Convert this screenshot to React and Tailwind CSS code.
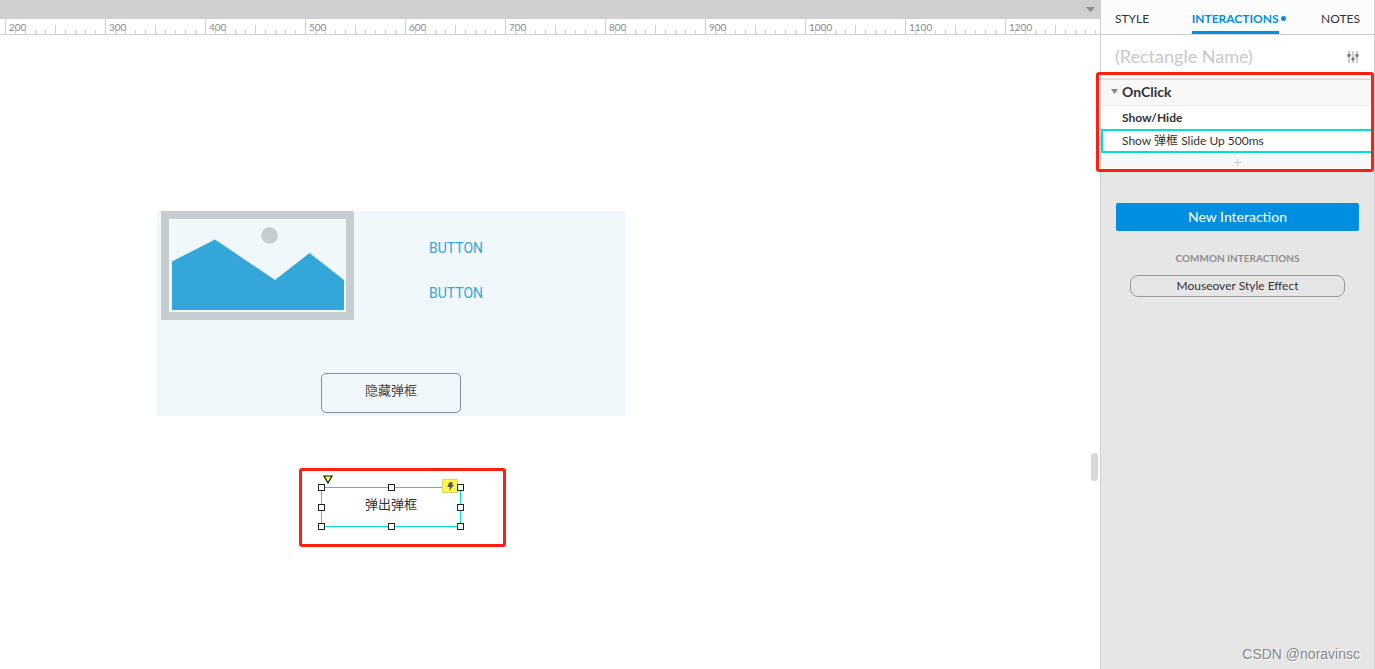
import React from "react";
import clsx from "clsx";

const rulerMarks = [200, 300, 400, 500, 600, 700, 800, 900, 1000, 1100, 1200];

const tabs = [
  { id: "style", label: "STYLE" },
  { id: "interactions", label: "INTERACTIONS", hasContent: true },
  { id: "notes", label: "NOTES" },
];

const handles = [
  "left-[-3px] top-[-3px]",
  "left-[67px] top-[-3px]",
  "left-[136px] top-[-3px]",
  "left-[-3px] top-[17px]",
  "left-[136px] top-[17px]",
  "left-[-3px] top-[36px]",
  "left-[67px] top-[36px]",
  "left-[136px] top-[36px]",
];

const RulerSegment = ({ value }) => (
  <div className="relative flex h-full w-[100px] shrink-0 items-end gap-[9px]">
    {Array.from({ length: 10 }, (_, i) => (
      <span
        key={i}
        className={clsx(
          "w-px bg-[#cfcfcf]",
          i === 0 ? "h-full" : i === 5 ? "h-[9px]" : "h-1"
        )}
      />
    ))}
    <span className="absolute left-1 top-0 text-[10px] leading-4 text-[#888]">
      {value}
    </span>
  </div>
);

const Ruler = () => (
  <div className="flex h-4 overflow-hidden border-b border-[#cfcfcf] bg-white pl-[5px]">
    {rulerMarks.map((mark) => (
      <RulerSegment key={mark} value={mark} />
    ))}
  </div>
);

const ImagePlaceholder = () => (
  <svg
    viewBox="0 0 193 109"
    className="h-[109px] w-[193px] shrink-0"
    role="img"
    aria-label="Image placeholder"
  >
    <path d="M0 0h193v109H0z" fill="#c6cdd0" />
    <path d="M8 8h177v93H8z" fill="#f0f8fb" />
    <circle cx="108.5" cy="24.5" r="8.3" fill="#c6cdd0" />
    <path d="M11 50.5 54 28.5l60 40.5 34.500-27L183 69v30H11z" fill="#34a6da" />
  </svg>
);

const Popup = () => (
  <div className="absolute left-[157px] top-[176px] flex h-[205px] w-[468px] flex-col items-center justify-between bg-[#f0f8fb] pb-[3px]">
    <div className="flex w-full pl-1">
      <ImagePlaceholder />
      <div className="ml-[60px] flex w-[84px] flex-col gap-[17px] pt-[23px] font-['Roboto',sans-serif] text-sm text-[#34a6da]">
        <button type="button" className="h-7">
          BUTTON
        </button>
        <button type="button" className="h-7">
          BUTTON
        </button>
      </div>
    </div>
    <button
      type="button"
      className="h-10 w-[140px] rounded-[5px] border border-[#868f93] pb-1 text-[13px] text-[#444]"
    >
      隐藏弹框
    </button>
  </div>
);

const SelectedButton = () => (
  <div className="absolute left-[321px] top-[452px] h-10 w-[140px]">
    <button
      type="button"
      className="h-full w-full border border-[#00dfd8] pb-1 text-[13px] text-[#333]"
    >
      弹出弹框
    </button>
    <span className="absolute -top-2 left-[121px] flex h-[14px] w-4 items-center justify-center border border-[#d6d27c] bg-[#fff945]">
      <svg viewBox="0 0 8 10" className="h-[9px] w-[7px]" fill="#555">
        <path d="M2.500 0h4.500L5.500 3H8L2.500 10l1-4.500H.5z" />
      </svg>
    </span>
    <svg viewBox="0 0 10 9" className="absolute -top-3 left-[2px] h-[9px] w-[10px]">
      <path
        d="M1 1h8L5 8z"
        fill="#fff945"
        stroke="#111"
        strokeWidth="1.2"
      />
    </svg>
    {handles.map((place) => (
      <span
        key={place}
        className={clsx("absolute h-[7px] w-[7px] border border-[#222] bg-white", place)}
      />
    ))}
  </div>
);

const Canvas = () => (
  <main className="relative flex-1 overflow-hidden bg-white">
    <Popup />
    <SelectedButton />
    <div className="pointer-events-none absolute left-[299px] top-[433px] h-[79px] w-[207px] rounded-[3px] border-3 border-[#ff1f12]" />
    <div className="absolute right-[2px] top-[418px] h-7 w-[7px] rounded-[3px] bg-[#d8d8d8]" />
  </main>
);

const Tabs = () => (
  <nav className="flex h-[35px] items-start justify-between border-b border-[#cfcfcf] bg-[#fcfcfc] px-[14px] text-[12px]">
    {tabs.map(({ id, label, hasContent }) => (
      <button
        key={id}
        type="button"
        className={clsx(
          "relative h-[34px] pt-[6px]",
          hasContent
            ? "border-b-3 border-[#008fe0] font-bold text-[#008fe0]"
            : "pb-[3px] text-[#333]"
        )}
      >
        {label}
        {hasContent && (
          <span className="absolute -right-[7px] top-4 h-[5px] w-[5px] rounded-full bg-[#008fe0]" />
        )}
      </button>
    ))}
  </nav>
);

const SlidersIcon = () => (
  <svg viewBox="0 0 12 12" className="h-3 w-3" fill="#777">
    <path d="M1.500 0h1v12h-1zM5.500 0h1v12h-1zM9.500 0h1v12h-1z" fill="#999" />
    <circle cx="2" cy="4.500" r="1.700" />
    <circle cx="6" cy="8" r="1.700" />
    <circle cx="10" cy="4.500" r="1.700" />
  </svg>
);

const EventCase = () => (
  <section className="bg-white text-[#333]">
    <h2 className="flex h-[27px] items-center gap-1 border-y border-[#ececec] border-t-[#dcdcdc] bg-[#f8f8f8] pl-[10px] pb-[2px] text-sm font-bold">
      <svg viewBox="0 0 7 5" className="h-[5px] w-[7px]" fill="#888">
        <path d="M0 0h7L3.500 5z" />
      </svg>
      OnClick
    </h2>
    <h3 className="flex h-[23px] items-center pl-[21px] text-[12px] font-bold">
      Show/Hide
    </h3>
    <button
      type="button"
      className="flex h-6 w-full items-center border-2 border-[#00dfd8] pb-px pl-[19px] text-[12px]"
    >
      Show 弹框 Slide Up 500ms
    </button>
    <button
      type="button"
      aria-label="Add target"
      className="flex h-[18px] w-full items-center justify-center bg-[#f8f8f8]"
    >
      <svg viewBox="0 0 7 7" className="h-[7px] w-[7px]" fill="#ccc">
        <path d="M3 0h1v3h3v1H4v3H3V4H0V3h3z" />
      </svg>
    </button>
  </section>
);

const InteractionsPanel = () => (
  <aside className="relative flex w-[275px] shrink-0 flex-col border-x border-[#cfcfcf] bg-[#e6e6e6]">
    <Tabs />
    <div className="flex h-11 items-center justify-between border-b border-[#e6e6e6] bg-white pl-[14px] pr-[15px]">
      <input
        type="text"
        aria-label="Shape name"
        placeholder="(Rectangle Name)"
        className="w-[200px] text-[18px] text-[#333] outline-none placeholder:text-[#c8c8c8]"
      />
      <button type="button" aria-label="Filter properties">
        <SlidersIcon />
      </button>
    </div>
    <EventCase />
    <div className="flex flex-col items-center px-[15px] pt-8">
      <button
        type="button"
        className="h-7 w-full rounded-[2px] bg-[#008fe0] text-sm text-white"
      >
        New Interaction
      </button>
      <h4 className="mt-5 text-[10px] leading-[15px] font-bold text-[#8f8f8f]">
        COMMON INTERACTIONS
      </h4>
      <button
        type="button"
        className="mt-[9px] h-[22px] w-[215px] rounded-[8px] border border-[#999] text-[12px] leading-4 text-[#333]"
      >
        Mouseover Style Effect
      </button>
    </div>
    <p className="mt-auto pr-[14px] pb-[5px] text-right font-['Liberation_Sans',sans-serif] text-sm text-[#888] [text-shadow:1px_1px_0_#fff]">
      CSDN @noravinsc
    </p>
    <div className="pointer-events-none absolute -left-[5px] top-[72px] h-[100px] w-[278px] rounded-[3px] border-3 border-[#ff1f12]" />
  </aside>
);

const App = () => (
  <div className="flex min-h-screen overflow-hidden font-['Lato','Noto_Sans_CJK_SC',sans-serif]">
    <div className="flex min-w-0 flex-1 flex-col">
      <div className="flex h-[19px] items-center justify-end bg-[#cfcfcf] pr-[5px]">
        <button type="button" aria-label="Open pages">
          <svg viewBox="0 0 9 5" className="h-[5px] w-[9px]" fill="#888">
            <path d="M0 0h9L4.500 5z" />
          </svg>
        </button>
      </div>
      <Ruler />
      <Canvas />
    </div>
    <InteractionsPanel />
  </div>
);

export default App;
